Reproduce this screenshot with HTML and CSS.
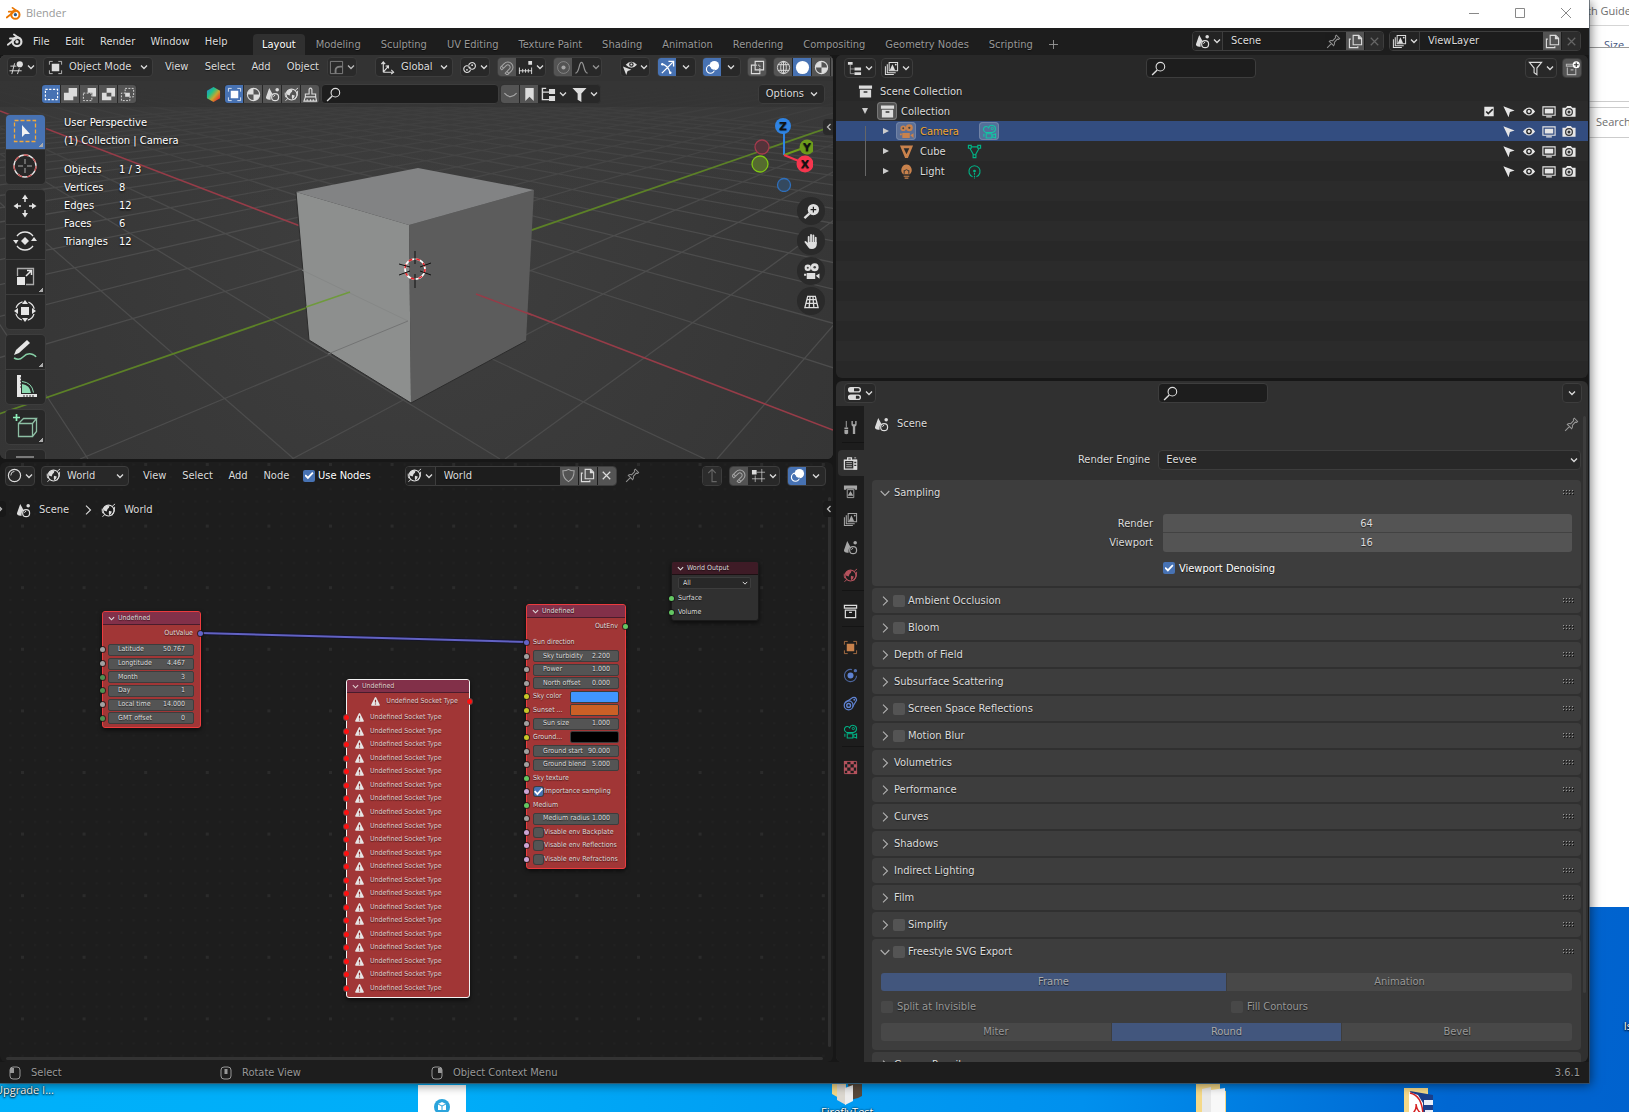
FILE: index.html
```html
<!DOCTYPE html>
<html lang="en">
<head>
<meta charset="utf-8">
<title>Blender</title>
<link rel="stylesheet" href="styles.css">
</head>
<body>
<svg class="sprite" aria-hidden="true">
<defs>
<linearGradient id="rainbow" x1="0" y1="0" x2="1" y2="1"><stop offset="0" stop-color="#2a7de0"/><stop offset=".35" stop-color="#1fc38a"/><stop offset=".6" stop-color="#c9a52e"/><stop offset=".85" stop-color="#e8382c"/></linearGradient>
<symbol id="chev" viewBox="0 0 8 8"><path d="M1 2.500 4 5.500l3-3" fill="none" stroke="currentColor" stroke-width="1.300"/></symbol>
<symbol id="thin" viewBox="0 0 10 10"><path d="M.7 3 5 7.500 9.300 3" fill="none" stroke="currentColor" stroke-width="1.100"/></symbol>
<symbol id="logo" viewBox="0 0 16 14"><circle cx="10" cy="8.2" r="4.4" fill="none" stroke="currentColor" stroke-width="2.2"/><circle cx="10" cy="8.2" r="1.7" fill="var(--dot, currentColor)"/><path d="M.8 11.2 7.5 6M3 5h6.5M7 1l5.500 4" fill="none" stroke="currentColor" stroke-width="1.900" stroke-linecap="round"/></symbol>
<symbol id="ed3d" viewBox="0 0 16 16"><g fill="none" stroke="currentColor" stroke-width="1"><path d="M1.500 6.500H8M.5 11.500h13M6 3.500 3 15M11 9 9 15"/></g><circle cx="11.500" cy="4.500" r="3.300" fill="currentColor"/></symbol>
<symbol id="obj" viewBox="0 0 16 16"><path d="M4 4h8v8H4z" fill="currentColor"/><path d="M1.500 5V1.500H5M11 1.500h3.500V5M14.500 11v3.500H11M5 14.500H1.500V11" fill="none" stroke="currentColor" opacity=".8"/></symbol>
<symbol id="falloff" viewBox="0 0 16 16"><path d="M1.500 1.500h13v13h-13z" fill="none" stroke="currentColor"/><path d="M7 14V11q0-4 5-4h2" fill="none" stroke="currentColor" stroke-width="2"/></symbol>
<symbol id="orient" viewBox="0 0 16 16"><path d="M3.500 13V3M3.500 13H13M3.500 13l5-6M1.500 4.500 3.500 2l2 2.500M12 10.500l2.500 2.500-2.500 2M6 6.500l3-.3V9" fill="none" stroke="currentColor" stroke-width="1.200"/></symbol>
<symbol id="pivot" viewBox="0 0 16 16"><g fill="none" stroke="currentColor" stroke-width="1.200"><path d="M7.500 6.700A3.600 3.600 0 1 0 9 10.500M8.300 9A3.600 3.600 0 1 0 7.200 5.500"/></g><circle cx="8" cy="8" r="1.200" fill="currentColor"/><circle cx="5.300" cy="10.500" r="1" fill="currentColor"/><circle cx="10.800" cy="5.500" r="1" fill="currentColor"/></symbol>
<symbol id="magnet" viewBox="0 0 16 16"><g transform="rotate(45 8 8)"><path d="M2.500 14V7.500a5.500 5.500 0 0 1 11 0V14h-3V7.500a2.500 2.500 0 0 0-5 0V14zM2.500 11.500h3M10.500 11.500h3" fill="none" stroke="currentColor" stroke-width="1.100"/></g></symbol>
<symbol id="incr" viewBox="0 0 16 16"><path d="M11 1h4v4h-4z" fill="currentColor"/><path d="M1.500 8v7M14.500 8v7M1 11.500h14M5 9.500v4M8 9.500v4M11 9.500v4" stroke="currentColor" fill="none"/></symbol>
<symbol id="prop" viewBox="0 0 16 16"><circle cx="8" cy="8" r="6.300" fill="none" stroke="currentColor" opacity=".6"/><circle cx="8" cy="8" r="2.200" fill="currentColor"/></symbol>
<symbol id="bell" viewBox="0 0 16 16"><path d="M1.500 14C6 14 5 2.500 8 2.500S10 14 14.500 14" fill="none" stroke="currentColor" stroke-width="1.300"/></symbol>
<symbol id="eye" viewBox="0 0 16 16"><path d="M1.500 8q6.500-8.500 13 0-6.500 8.500-13 0z" fill="currentColor"/><circle cx="8" cy="8" r="3" fill="#292929"/><circle cx="8" cy="8" r="1.500" fill="currentColor"/></symbol>
<symbol id="eyecur" viewBox="0 0 16 16"><path d="M4 5q6-6.500 12 0-6 6.500-12 0z" fill="currentColor"/><circle cx="10" cy="4.800" r="2.400" fill="#282828"/><circle cx="10" cy="4.800" r="1.100" fill="currentColor"/><path d="m1 7 9 3.500-4 1.200L4.500 16z" fill="currentColor"/></symbol>
<symbol id="gizmo" viewBox="0 0 16 16"><path d="M1.500 4.500q7 .5 9.500 10M2 14 13.500 2.500M9 1.500h5.500V7" fill="none" stroke="currentColor" stroke-width="1.400"/><circle cx="2.500" cy="4.500" r="1.300" fill="currentColor"/><circle cx="11" cy="13.500" r="1.300" fill="currentColor"/></symbol>
<symbol id="over" viewBox="0 0 16 16"><circle cx="10" cy="6" r="5" fill="currentColor"/><circle cx="5.800" cy="9.800" r="4.300" fill="none" stroke="currentColor" stroke-width="1.200"/><path d="M5.200 7.500a4.500 4.500 0 0 0 5.300 3.300" fill="none" stroke="#4772b3" stroke-width="1.300"/></symbol>
<symbol id="xray" viewBox="0 0 16 16"><path d="M5.500 1.500h9v9h-9zM5 5.500H1.500v9h9V11" fill="none" stroke="currentColor" stroke-width="1.200"/><path d="M6 5.500h4.500V10" fill="none" stroke="currentColor" stroke-dasharray="1.500 1"/></symbol>
<symbol id="wire" viewBox="0 0 16 16"><g fill="none" stroke="currentColor"><circle cx="8" cy="8" r="6.500"/><ellipse cx="8" cy="8" rx="3" ry="6.500"/><path d="M8 1.500v13M2 5h12M2 11h12"/></g></symbol>
<symbol id="solid" viewBox="0 0 16 16"><circle cx="8" cy="8" r="7" fill="currentColor"/></symbol>
<symbol id="mat" viewBox="0 0 16 16"><circle cx="8" cy="8" r="6.500" fill="none" stroke="currentColor" stroke-width="1.200"/><path d="M8 8V1.500A6.500 6.500 0 0 0 1.500 8zM8 8v6.500A6.500 6.500 0 0 0 14.500 8z" fill="currentColor"/></symbol>
<symbol id="selset" viewBox="0 0 16 16"><path d="M1.500 2.500h13v11h-13z" fill="none" stroke="currentColor" stroke-width="1.200" stroke-dasharray="2.400 1.600"/></symbol>
<symbol id="selext" viewBox="0 0 16 16"><path d="M6 1h9v9h-4v4H1V6h5z" fill="currentColor"/></symbol>
<symbol id="selsub" viewBox="0 0 16 16"><path d="M6 1h9v9h-4V6H6z" fill="currentColor"/><path d="M1.500 6.500h9v8h-9z" fill="none" stroke="currentColor" stroke-dasharray="2 1.500"/></symbol>
<symbol id="selinv" viewBox="0 0 16 16"><path fill-rule="evenodd" d="M6 1h9v9h-4v4H1V6h5zM6 6v4h5V6z" fill="currentColor"/></symbol>
<symbol id="selint" viewBox="0 0 16 16"><path d="M5.500 6h5v4.500h-5z" fill="currentColor"/><path d="M5.500 1.500h9v9h-4v4h-9v-8h4z" fill="none" stroke="currentColor" stroke-dasharray="2 1.500"/></symbol>
<symbol id="hex" viewBox="0 0 16 16"><path d="m8 0 7 4v8l-7 4-7-4V4z" fill="url(#rainbow)"/></symbol>
<symbol id="scene" viewBox="0 0 16 16"><path d="M4.500 1 8 7.500Q5.500 9 6 13.500 1 14 1 11z" fill="currentColor"/><circle cx="13" cy="3" r="1.900" fill="currentColor"/><circle cx="10.800" cy="10.800" r="3.700" fill="none" stroke="currentColor" stroke-width="1.300"/><path d="M9 10.500q.3-1.500 1.800-1.700" fill="none" stroke="currentColor"/></symbol>
<symbol id="world" viewBox="0 0 16 16"><circle cx="8" cy="8" r="5.800" fill="none" stroke="currentColor" stroke-width="1.200"/><path d="M3 4.500 6 2.300l3 .7-.5 2L7 6.500 6 9 3 8zM8.500 8.300l3 .7-.6 2L9 13.300l-.7-2.500z" fill="currentColor"/><path d="M12 3.500 15 1M1.500 14.500l2.500-2M14.500 4q1 5-3 9.500M1.300 6Q1 9 2 11" fill="none" stroke="currentColor"/></symbol>
<symbol id="brush" viewBox="0 0 16 16"><path d="M6.500 7.500v-5q1.500-2.500 3 0v5h4v3h-11v-3zM2.500 10.500 1 15h13.500l-1-4.500M4.500 15v-2M8 15v-2M11 15v-2" fill="none" stroke="currentColor" stroke-width="1.200"/></symbol>
<symbol id="find" viewBox="0 0 16 16"><circle cx="10" cy="6" r="4.600" fill="none" stroke="currentColor" stroke-width="1.200"/><path d="M6.600 9.500 1.200 15" stroke="currentColor" stroke-width="1.500"/></symbol>
<symbol id="lid" viewBox="0 0 16 16"><path d="M1.500 6.500q6.500 7.500 13 0" fill="none" stroke="currentColor" stroke-width="1.200"/></symbol>
<symbol id="mark" viewBox="0 0 16 16"><path d="M3.500 1h9v14L8 10.500 3.500 15z" fill="currentColor"/></symbol>
<symbol id="tree" viewBox="0 0 16 16"><path d="M5.500 1.500h-4v12H9M1.500 5.500H9" fill="none" stroke="currentColor" stroke-width="1.500"/><path d="M8.500 2H15v5.500H8.500zM8.500 9.500H15V15H8.500z" fill="currentColor"/></symbol>
<symbol id="outl" viewBox="0 0 16 16"><path d="M1 1h5v3H1zM8 7h7v3H8zM8 12h7v3H8z" fill="currentColor"/><path d="M3.500 4v9.500H8M3.500 8.500H8" fill="none" stroke="currentColor" opacity=".6"/></symbol>
<symbol id="fun" viewBox="0 0 16 16"><path d="M.5 1h15l-5.500 6v9l-4-2.500V7z" fill="currentColor"/></symbol>
<symbol id="funo" viewBox="0 0 16 16"><path d="M1.500 1.500h13L9.500 7.500v7l-3-2v-5z" fill="none" stroke="currentColor" stroke-width="1.200"/></symbol>
<symbol id="view" viewBox="0 0 16 16"><path d="M5.500 1.500h9v9h-9zM3.500 3.500v9h9M1.500 5.500v9h9" fill="none" stroke="currentColor" stroke-width="1.100"/><path d="m6 10 3-6.500 3 6.500z" fill="currentColor"/><circle cx="12.500" cy="3.800" r="1" fill="currentColor"/></symbol>
<symbol id="box" viewBox="0 0 16 16"><path d="M1 1.500h14V5H1zM2 6h12v8.500H2z" fill="currentColor"/><path d="M6 8.500h4" stroke="#333" stroke-width="1.500"/></symbol>
<symbol id="boxo" viewBox="0 0 16 16"><path d="M1.500 1.500h13v3h-13zM2.500 6.500h11v8h-11zM6.500 9h3" fill="none" stroke="currentColor" stroke-width="1.300"/></symbol>
<symbol id="boxadd" viewBox="0 0 16 16"><path d="M9 3.500H1.500v2H9M2.500 7v7.500h9V8M6 9.500h3" fill="none" stroke="currentColor" stroke-width="1.200" opacity=".7"/><circle cx="12" cy="4" r="3.800" fill="#fff"/><path d="M9.500 4h5M12 1.500v5" stroke="#333" stroke-width="1.200"/></symbol>
<symbol id="cam" viewBox="0 0 16 16"><circle cx="4.500" cy="4.500" r="3" fill="currentColor"/><circle cx="11" cy="4" r="3.700" fill="currentColor"/><path d="M3.500 9.500h8v5.500h-8zM12 12l3.500-2.200v5zM1 10h2v2H1z" fill="currentColor"/><circle cx="4.500" cy="4.500" r="1" fill="#444"/><circle cx="11" cy="4" r="1.200" fill="#444"/></symbol>
<symbol id="camo" viewBox="0 0 16 16"><path d="M3.500 8.500a3 3 0 1 1 3.500-4.500 3.800 3.800 0 1 1 4 5H3.500M4.500 10.500h6V15h-6zM11 12l3.500-1.500V15L11 13.500M2 10.500v3" fill="none" stroke="currentColor" stroke-width="1.100"/><circle cx="11" cy="4.800" r="1.200" fill="none" stroke="currentColor"/></symbol>
<symbol id="mesh" viewBox="0 0 16 16"><path fill-rule="evenodd" d="M1 1.500h14L9.500 15h-3zM5 4.500 8 11l3-6.500z" fill="currentColor"/></symbol>
<symbol id="mesho" viewBox="0 0 16 16"><path d="M1.500 1.500h3v3h-3zM11.500 1.500h3v3h-3zM6.500 11.500h3v3h-3zM4.500 3h7M3 4.500l4 7M13 4.500l-4 7" fill="none" stroke="currentColor" stroke-width="1.200"/></symbol>
<symbol id="lamp" viewBox="0 0 16 16"><path d="M8 .5a6 6 0 0 1 3.500 10.500h-7A6 6 0 0 1 8 .5z" fill="currentColor"/><path d="M5.500 6.500v4M10.500 6.500v4M5.500 7.500 8 6l2.500 1.500" stroke="#333" fill="none"/><path d="M5 13h6M6 15h4" stroke="currentColor" stroke-width="1.200"/></symbol>
<symbol id="lampo" viewBox="0 0 16 16"><path d="M6 13.500a6 6 0 1 1 4 0" fill="none" stroke="currentColor" stroke-width="1.200"/><circle cx="8" cy="7.500" r="1.500" fill="currentColor"/><path d="M8 9.500V16" stroke="currentColor" stroke-width="1.200" stroke-dasharray="2 1"/></symbol>
<symbol id="cur" viewBox="0 0 16 16"><path d="m2 2.500 12 4.500-5 1.500L7.500 14z" fill="currentColor"/></symbol>
<symbol id="mon" viewBox="0 0 16 16"><path d="M1.500 3h13v9h-13z" fill="none" stroke="currentColor" stroke-width="1.200"/><path d="M3.500 5h9v5h-9zM5 13h6v1.500H5z" fill="currentColor"/></symbol>
<symbol id="shot" viewBox="0 0 16 16"><path d="M1 4h3.500L6 2h4l1.500 2H15v9.500H1z" fill="currentColor"/><circle cx="8" cy="8.500" r="3.600" fill="none" stroke="#333" stroke-width="1.300"/><circle cx="8" cy="8.500" r="1.600" fill="#333"/></symbol>
<symbol id="tick" viewBox="0 0 16 16"><path d="M3 3h10v10H3z" fill="currentColor"/><path d="m5 8 2.200 2.200L12 5.500" fill="none" stroke="#282828" stroke-width="1.800"/></symbol>
<symbol id="pin" viewBox="0 0 16 16"><path d="m1.200 14.800 4.500-4.500M3.500 7.800l4.700 4.700q1.500-1.500.7-3.500L12 5.500l1.500.2 1-1L11 1.200l-1 1 .3 1.600L7 7.300Q5 6.500 3.500 7.800z" fill="none" stroke="currentColor" stroke-width="1.100"/></symbol>
<symbol id="copy" viewBox="0 0 16 16"><path d="M5.500 1.500h6l3 3v7h-9zM3 5.500H1.500v9h9V13" fill="none" stroke="currentColor" stroke-width="1.200"/><path d="M10.500 1v4.500H15z" fill="currentColor"/></symbol>
<symbol id="x" viewBox="0 0 16 16"><path d="m4 4 8 8M12 4l-8 8" fill="none" stroke="currentColor" stroke-width="1.300"/></symbol>
<symbol id="shield" viewBox="0 0 16 16"><path d="M8 1.500q3 1.800 6 1.500 0 8.500-6 11.500-6-3-6-11.500 3 .3 6-1.500z" fill="none" stroke="currentColor" stroke-width="1.100"/></symbol>
<symbol id="up" viewBox="0 0 16 16"><path d="M12.500 14.500H7.500v-13M3.500 5.500l4-4 4 4" fill="none" stroke="currentColor" stroke-width="1.200"/></symbol>
<symbol id="sgrid" viewBox="0 0 16 16"><path d="M1 2h5v5H1z" fill="currentColor"/><path d="M1 11.500h14M6 4.500h9M4.500 8v7M11.500 1v14" stroke="currentColor" fill="none" opacity=".7"/></symbol>
<symbol id="ball" viewBox="0 0 16 16"><circle cx="8" cy="8" r="6.500" fill="none" stroke="currentColor" stroke-width="1.300"/><path d="M4 8q0-4 4-4.500" fill="none" stroke="currentColor"/></symbol>
<symbol id="props" viewBox="0 0 16 16"><path d="M4 1h8q3 0 3 3t-3 3H4Q1 7 1 4t3-3zM4 9h8q3 0 3 3t-3 3H4q-3 0-3-3t3-3z" fill="currentColor"/><path d="M7.500 2.300H12q1.500 0 1.500 1.700T12 5.700H7.500zM9.500 10.300H12q1.500 0 1.500 1.700t-1.500 1.700H9.500z" fill="#282828"/></symbol>
<symbol id="tool" viewBox="0 0 16 16"><path d="M3.500 1v7" stroke="currentColor"/><path d="M1.500 8h4v1.500h-4zM1.500 10.500h4v4q-2 1.500-4 0zM9 1v3.500q0 2 1.500 2.500v8h2.500V7q1.500-.5 1.500-2.500V1H13v3.500h-2.500V1z" fill="currentColor"/></symbol>
<symbol id="rend" viewBox="0 0 16 16"><path d="M1.500 4.500h13V14h-13zM5 4V2h4v2" fill="none" stroke="currentColor" stroke-width="1.400"/><path d="M3.500 7h6M3.500 9.200h6M3.500 11.400h6" stroke="currentColor" opacity=".7"/><path d="M11 4h4v10.500h-4zM12 1.500h2v1h-2z" fill="currentColor"/><path d="M12 7h2.200M12 10h2.200" stroke="#303030" stroke-width="1.500"/></symbol>
<symbol id="out" viewBox="0 0 16 16"><path d="M1 1.500h14V6h-2.500V5h-9v1H1z" fill="currentColor"/><path d="M4.500 6v8.500h7V6z" fill="none" stroke="currentColor"/><path d="m5 12.500 3-5 3 5z" fill="currentColor"/></symbol>
<symbol id="phys" viewBox="0 0 16 16"><circle cx="8" cy="8" r="3.200" fill="currentColor"/><circle cx="13.200" cy="2.800" r="1.800" fill="currentColor" opacity=".8"/><path d="M9.500 1.700a6.500 6.500 0 1 0 5 6.500" fill="none" stroke="currentColor" opacity=".7" stroke-width="1.200"/></symbol>
<symbol id="cons" viewBox="0 0 16 16"><circle cx="6" cy="10" r="4.700" fill="none" stroke="currentColor" stroke-width="1.300"/><circle cx="6" cy="10" r="2" fill="none" stroke="currentColor" stroke-width="1.500"/><path d="M2.500 7 10 1.800q4-1.500 4.500 2.700L10.300 11.500" fill="none" stroke="currentColor" stroke-width="1.300"/><circle cx="12" cy="4" r="1" fill="currentColor"/></symbol>
<symbol id="tex" viewBox="0 0 16 16"><path d="M1.500 1.500h13v13h-13z" fill="none" stroke="currentColor"/><path d="M1 1h3.500v3.500H1zM8 1h3.500v3.500H8zM4.500 4.500H8V8H4.500zM11.500 4.500H15V8h-3.500zM1 8h3.500v3.500H1zM8 8h3.500v3.500H8zM4.500 11.500H8V15H4.500zM11.500 11.500H15V15h-3.500z" fill="currentColor"/></symbol>
<symbol id="warn" viewBox="0 0 10 10"><path d="M5 0q.6 0 .8.500l4 8q.2 1-.8 1.200H1q-1-.2-.8-1.200l4-8Q4.400 0 5 0z" fill="#e6e6e6"/><path d="M5 3v3M5 7.200v1.200" stroke="#8a2c2c" stroke-width="1.300"/></symbol>
<symbol id="grip" viewBox="0 0 12 6"><path d="M0 .5h1M3 .5h1M6 .5h1M9 .5h1M0 3.500h1M3 3.500h1M6 3.500h1M9 3.500h1" stroke="#999"/><path d="M1 1.500h1M4 1.500h1M7 1.500h1M10 1.500h1M1 4.500h1M4 4.500h1M7 4.500h1M10 4.500h1" stroke="#111"/></symbol>
<symbol id="folder" viewBox="0 0 30 30"><path d="M0 0h24v5l6 2v23H0z" fill="#f5d988"/><path d="m6 5 9-2 1 27H6z" fill="#e9e9e9"/><path d="m15 6 14-2v26H15z" fill="#f8f8f8"/></symbol>
</defs>
</svg>

<div class="back-window">
  <div class="bw-title">th Guide</div>
  <div class="bw-cols"><span>Size</span></div>
  <div class="bw-front">
    <div class="bw-bar"></div>
    <div class="bw-search">Search</div>
  </div>
</div>

<div class="desk d-upgrade">Upgrade I...</div>
<div class="desk d-file"><svg viewBox="0 0 48 28"><path d="M0 1h48v27H0z" fill="#fff"/><circle cx="24" cy="23" r="8" fill="#2aa4dc"/><path d="m24 18 4 2v6h-8v-6z" fill="#fff"/><path d="m20 20 4 2 4-2M24 22v6" stroke="#2aa4dc" fill="none"/></svg></div>
<div class="desk d-firefly"><svg viewBox="0 0 30 22"><path d="M0 0h14v18L0 10z" fill="#f5d988"/><path d="m5 0 9 1v20l-9-5z" fill="#dcd8d0"/><path d="M16 0h14v12l-4 2-8 2z" fill="#57493c"/><path d="m13 4 8-3v16l-8 4z" fill="#eee"/></svg><span>FireflyTest</span></div>
<div class="desk d-folder"><svg viewBox="0 0 30 30"><use href="#folder"/></svg></div>
<div class="desk d-pdf"><svg viewBox="0 0 30 30"><path d="M0 0h24v30H0z" fill="#f5d988"/><path d="m6 3 23 4v23H14z" fill="#1c3f8a"/><path d="M20 12h9v5h-9zM21 22h8v6h-8z" fill="#e8eef8"/><path d="m5 4 9 3 5 8v15H5z" fill="#fff"/><path d="M6 5q13 3 13 24M8 26q5-4 4-10 1 7 5 9-5-1-9 1" fill="none" stroke="#d62222" stroke-width="1.500"/></svg></div>
<div class="desk d-is">Is</div>

<div class="app">
  <header class="titlebar">
    <svg class="ic t-logo"><use href="#logo"/></svg><span class="t-name">Blender</span>
    <button aria-label="Minimize"><svg viewBox="0 0 10 10"><path d="M0 5.500h10"/></svg></button>
    <button aria-label="Maximize"><svg viewBox="0 0 10 10"><path d="M.5.5h9v9h-9z"/></svg></button>
    <button aria-label="Close"><svg viewBox="0 0 10 10"><path d="m0 0 10 10M10 0 0 10"/></svg></button>
  </header>

  <nav class="topbar">
    <svg class="ic b-logo"><use href="#logo"/></svg>
    <div class="menus m-top"><button>File</button><button>Edit</button><button>Render</button><button>Window</button><button>Help</button></div>
    <div class="tabs" role="tablist"><button class="on" role="tab">Layout</button><button role="tab">Modeling</button><button role="tab">Sculpting</button><button role="tab">UV Editing</button><button role="tab">Texture Paint</button><button role="tab">Shading</button><button role="tab">Animation</button><button role="tab">Rendering</button><button role="tab">Compositing</button><button role="tab">Geometry Nodes</button><button role="tab">Scripting</button><button class="plus" aria-label="Add workspace"><svg viewBox="0 0 10 10"><path d="M0 5h10M5 0v10"/></svg></button></div>
    <div class="grp block"><button class="dd"><svg class="ic"><use href="#scene"/></svg><svg class="cv"><use href="#chev"/></svg></button><input aria-label="Scene" value="Scene"><svg class="ic dim fieldpin"><use href="#pin"/></svg><button class="sq grey"><svg class="ic"><use href="#copy"/></svg></button><button class="sq off"><svg class="ic"><use href="#x"/></svg></button></div>
    <div class="grp block"><button class="dd"><svg class="ic"><use href="#view"/></svg><svg class="cv"><use href="#chev"/></svg></button><input aria-label="View layer" value="ViewLayer"><button class="sq grey"><svg class="ic"><use href="#copy"/></svg></button><button class="sq off"><svg class="ic"><use href="#x"/></svg></button></div>
  </nav>

  <main class="areas">
    <div class="col">
      <section class="area viewport">
        <svg class="scene3d" viewBox="0 55 833 404" preserveAspectRatio="xMidYMid slice">
          <defs>
            <radialGradient id="vbg" gradientUnits="userSpaceOnUse" cx="416" cy="240" r="520"><stop offset="0" stop-color="#3f3f3f"/><stop offset="1" stop-color="#343434"/></radialGradient>
            <linearGradient id="fade" x1="0" y1="0" x2="0" y2="1"><stop offset="0" stop-color="#3a3a3a"/><stop offset=".15" stop-color="#3a3a3a"/><stop offset="1" stop-color="#3a3a3a" stop-opacity="0"/></linearGradient>
          </defs>
          <path d="M0 55h833v404H0z" fill="url(#vbg)"/>
          <path fill="none" stroke="#4c4c4c" stroke-width="1.300" d="M1082 40L80 459M1082 40L292 459M1082 40L505 459M1082 40L717 459M1082 40L-346 459M1082 40L-558 459M1082 40L-771 459M1082 40L-983 459M1082 40L-1196 459M1082 40L-1409 459M1082 40L-1621 459M1082 40L-1834 459M1082 40L-2046 459M1082 40L-2259 459M1082 40L-2472 459M1082 40L-2684 459M1082 40L-2897 459M1082 40L-3109 459M1082 40L-3322 459M1082 40L-3535 459M1082 40L-3747 459M1082 40L-3960 459M1082 40L-4172 459M-187 40L705 459M-187 40L500 459M-187 40L294 459M-187 40L88 459M-187 40L1117 459M-187 40L1322 459M-187 40L1528 459M-187 40L1734 459M-187 40L1940 459M-187 40L2145 459M-187 40L2351 459M-187 40L2557 459M-187 40L2762 459M-187 40L2968 459M-187 40L3174 459M-187 40L3379 459M-187 40L3585 459M-187 40L3791 459M-187 40L3997 459M-187 40L4202 459M-187 40L4408 459M-187 40L4614 459"/>
          <path d="M0 55h833v165H0z" fill="url(#fade)"/>
          <path d="M0 111 833 430" stroke="#963c48" stroke-width="1.600"/>
          <path d="M-1 414 833 126" stroke="#5c8127" stroke-width="1.700"/>
          <path d="m296 192 113 33 2 178-102-63z" fill="#8d8f8e"/>
          <path d="m409 225 125-35-8 151-115 62z" fill="#5c5c5c"/>
          <path d="m418 168 116 22-125 35-113-33z" fill="#828384"/>
          <path d="m296 192 13 148 102 63 115-62" fill="none" stroke="#2c2c2c" stroke-width="1"/>
          <path d="m302 270 106 51" fill="none" stroke="#868887"/><path d="m408 321-80 33" fill="none" stroke="#737474"/>
          <path d="m306 307 44-15" stroke="#6f9a3c" stroke-width="1.500"/>
          <path d="m476 294 56 21" stroke="#963c48" stroke-width="1.500"/>
          <g fill="none"><circle cx="415" cy="269" r="10" stroke="#fff" stroke-width="1.600"/><circle cx="415" cy="269" r="10" stroke="#e8242a" stroke-width="1.600" stroke-dasharray="4 4"/><path d="M415 251v13M415 274v14M399 264l11 3M420 271l11 4M399 275l11-4M420 267l11-4" stroke="#111"/></g>
        </svg>
        <div class="hdr vh">
          <div class="grp"><button class="dd w30"><svg class="ic"><use href="#ed3d"/></svg><svg class="cv"><use href="#chev"/></svg></button></div>
          <div class="sel w-mode"><svg class="ic"><use href="#obj"/></svg><select aria-label="Mode"><option>Object Mode</option></select><svg class="cv"><use href="#chev"/></svg></div>
          <div class="menus m-view"><button>View</button><button>Select</button><button>Add</button><button>Object</button></div>
          <div class="grp faded"><button class="dd w30"><svg class="ic dim"><use href="#falloff"/></svg><svg class="cv"><use href="#chev"/></svg></button></div>
          <div class="sel w-global sp18"><svg class="ic"><use href="#orient"/></svg><select aria-label="Orientation"><option>Global</option></select><svg class="cv"><use href="#chev"/></svg></div>
          <div class="grp sp7"><button class="dd w30"><svg class="ic"><use href="#pivot"/></svg><svg class="cv"><use href="#chev"/></svg></button></div>
          <div class="grp sp7"><button class="sq grey"><svg class="ic dim"><use href="#magnet"/></svg></button><button class="dd w30"><svg class="ic"><use href="#incr"/></svg><svg class="cv"><use href="#chev"/></svg></button></div>
          <div class="grp sp7"><button class="sq grey"><svg class="ic dim"><use href="#prop"/></svg></button><button class="dd w30 dim"><svg class="ic"><use href="#bell"/></svg><svg class="cv"><use href="#chev"/></svg></button></div>
          <div class="grp sp18"><button class="dd w30"><svg class="ic"><use href="#eyecur"/></svg><svg class="cv"><use href="#chev"/></svg></button></div>
          <div class="grp sp7"><button class="sq blue"><svg class="ic"><use href="#gizmo"/></svg></button><button class="sq"><svg class="cv"><use href="#chev"/></svg></button></div>
          <div class="grp sp6"><button class="sq blue"><svg class="ic"><use href="#over"/></svg></button><button class="sq"><svg class="cv"><use href="#chev"/></svg></button></div>
          <div class="grp sp6"><button class="sq grey"><svg class="ic"><use href="#xray"/></svg></button></div>
          <div class="grp sp6"><button class="sq grey"><svg class="ic"><use href="#wire"/></svg></button><button class="sq blue"><svg class="ic"><use href="#solid"/></svg></button><button class="sq grey"><svg class="ic"><use href="#mat"/></svg></button><button class="sq grey"><svg class="ic"><use href="#ball"/></svg></button></div>
        </div>
        <div class="hdr vh2">
          <div class="grp soft"><button class="sq blue"><svg class="ic"><use href="#selset"/></svg></button><button class="sq grey"><svg class="ic"><use href="#selext"/></svg></button><button class="sq grey"><svg class="ic"><use href="#selsub"/></svg></button><button class="sq grey"><svg class="ic"><use href="#selinv"/></svg></button><button class="sq grey"><svg class="ic"><use href="#selint"/></svg></button></div>
          <svg class="ic hexi"><use href="#hex"/></svg>
          <div class="grp soft"><button class="sq blue"><svg class="ic"><use href="#obj"/></svg></button><button class="sq grey"><svg class="ic"><use href="#mat"/></svg></button><button class="sq grey"><svg class="ic"><use href="#scene"/></svg></button><button class="sq grey"><svg class="ic"><use href="#world"/></svg></button><button class="sq grey"><svg class="ic"><use href="#brush"/></svg></button></div>
          <label class="search s-view"><svg class="ic"><use href="#find"/></svg><input aria-label="Search"></label>
          <div class="grp soft"><button class="sq grey"><svg class="ic dim"><use href="#lid"/></svg></button><button class="sq grey"><svg class="ic"><use href="#mark"/></svg></button><button class="dd w32"><svg class="ic"><use href="#tree"/></svg><svg class="cv"><use href="#chev"/></svg></button><button class="dd w32"><svg class="ic"><use href="#fun"/></svg><svg class="cv"><use href="#chev"/></svg></button></div>
          <div class="grp push"><button class="dd opt">Options <svg class="cv"><use href="#chev"/></svg></button></div>
        </div>
        <div class="tools">
          <div class="tg"><button class="on more" aria-label="Select Box"><svg viewBox="0 0 26 26"><path d="M2.500 2.500h21v21h-21z" fill="none" stroke="#f2a93b" stroke-width="1.300" stroke-dasharray="4 2"/><path d="M10 7v12l3-3h5z" fill="#f2f2f2"/></svg></button><button aria-label="Cursor"><svg viewBox="0 0 26 26"><g fill="none"><circle cx="13" cy="13" r="11" stroke="#e6e6e6" stroke-width="1.300"/><circle cx="13" cy="13" r="11" stroke="#c25050" stroke-width="1.300" stroke-dasharray="5 5"/><path d="M13 6v5M13 15v5M6 13h5M15 13h5" stroke="#aaa"/></g></svg></button></div>
          <div class="tg"><button aria-label="Move"><svg viewBox="0 0 26 26"><path d="M13 1.500 10 6h6zM13 24.500 10 20h6zM1.500 13 6 10v6zM24.500 13 20 10v6z" fill="#e6e6e6"/><path d="M13 6v3M13 17v3M6 13h3M17 13h3" stroke="#e6e6e6" stroke-width="1.500"/></svg></button><button aria-label="Rotate"><svg viewBox="0 0 26 26"><path d="M5 8a10 10 0 0 1 16 0M5 18a10 10 0 0 0 16 0" fill="none" stroke="#e6e6e6" stroke-width="1.300"/><path d="m13 9 4 4-4 4-4-4zM1 12h5.500L4 16zM19 13l3-4 3 4z" fill="#e6e6e6"/></svg></button><button class="more" aria-label="Scale"><svg viewBox="0 0 26 26"><path d="M5.500 13V5.500h16v16H14" fill="none" stroke="#aaa" stroke-width="1.300"/><path d="M5 14h8v8H5z" fill="#e6e6e6"/><path d="m14 13 5-5M15 7.500h4.500V12" fill="none" stroke="#e6e6e6" stroke-width="1.500"/></svg></button><button aria-label="Transform"><svg viewBox="0 0 26 26"><circle cx="13" cy="13" r="9.500" fill="none" stroke="#e6e6e6" stroke-width="1.200" stroke-dasharray="9 6" stroke-dashoffset="-3"/><path d="M9 9h8v8H9zM13 2l-3 4h6zM13 24l-3-4h6zM2 13l4-3v6zM24 13l-4-3v6z" fill="#e6e6e6"/></svg></button></div>
          <div class="tg"><button class="more" aria-label="Annotate"><svg viewBox="0 0 26 26"><path d="m2 17 2-5L15 2l3 3L7 15z" fill="#e6e6e6"/><path d="M2 20q5 3 9-1t8-3 5 3" fill="none" stroke="#86cfa6" stroke-width="1.500"/></svg></button><button aria-label="Measure"><svg viewBox="0 0 26 26"><path d="M5 2h4v19h16v3H5z" fill="#e6e6e6"/><path d="M10 20V11q8 1 9 9z" fill="#8ddab2"/><path d="M10 8.500q10 1 11.500 11" fill="none" stroke="#8ddab2"/><path d="M8 5h2M8 8h2M8 11h2M8 14h2M12 22v2M15 22v2M18 22v2M21 22v2" stroke="#333"/></svg></button></div>
          <div class="tg"><button class="more" aria-label="Add Cube"><svg viewBox="0 0 26 26"><path d="M6.500 10.500h14v13h-14zM6.500 10.500l5-5h13l-4 5M24.500 5.500v13l-4 5" fill="none" stroke="#8dbfa4" stroke-width="1.300"/><path d="M4.500 1v7M1 4.500h7" stroke="#8ff0bb" stroke-width="1.700"/></svg></button></div>
          <div class="tg"><button aria-label="Extrude"><svg viewBox="0 0 26 26"><path d="M4 4h18" stroke="#ccc"/></svg></button></div>
        </div>
        <div class="stats"><p>User Perspective</p><p>(1) Collection | Camera</p><dl><dt>Objects</dt><dd>1 / 3</dd><dt>Vertices</dt><dd>8</dd><dt>Edges</dt><dd>12</dd><dt>Faces</dt><dd>6</dd><dt>Triangles</dt><dd>12</dd></dl></div>
        <div class="navi">
          <svg class="axes" viewBox="0 0 70 84"><path d="M41 47V17" stroke="#2f83e3" stroke-width="2"/><path d="m41 47 22-8" stroke="#6d9c1b" stroke-width="2"/><path d="m41 47 22 9" stroke="#f6364e" stroke-width="2"/><circle cx="19" cy="39" r="7" fill="#55333a" stroke="#a33a4c" stroke-width="1.300"/><circle cx="17" cy="56" r="8" fill="#556b2f" stroke="#80c815" stroke-width="1.300"/><circle cx="41" cy="77" r="6.500" fill="#34495f" stroke="#2f6fba" stroke-width="1.300"/><circle cx="40" cy="18" r="8" fill="#2f83e3"/><circle cx="64" cy="39" r="7.500" fill="#6d9c1b"/><circle cx="62" cy="56" r="8.500" fill="#f6364e"/><g class="ax"><text x="40" y="22">Z</text><text x="64" y="43">Y</text><text x="62" y="60">X</text></g></svg>
          <button aria-label="Zoom"><svg viewBox="0 0 18 18"><circle cx="11" cy="7" r="6" fill="#dedede"/><path d="m7 11-5.500 5" stroke="#dedede" stroke-width="2.500"/><path d="M11 4v6M8 7h6" stroke="#222" stroke-width="1.300"/></svg></button>
          <button aria-label="Pan"><svg viewBox="0 0 18 18"><path d="M6 11V4M8.500 10V2M11 10V2.500M13.500 11V5" stroke="#dedede" stroke-width="1.900" stroke-linecap="round"/><path d="M5 9.500h9.500V13q-1 4-5 4-3 0-4-2L1.500 9.500q.5-1.500 2-.5L6 11.500z" fill="#dedede"/></svg></button>
          <button aria-label="Camera view"><svg viewBox="0 0 16 16"><use href="#cam"/></svg></button>
          <button aria-label="Perspective"><svg viewBox="0 0 18 18"><path d="M5 3.500h8l3 12H2zM4 7h10M3 11h12M7.500 3.500l-1 12M10.500 3.500l1 12" fill="none" stroke="#dedede" stroke-width="1.400"/></svg></button>
        </div>
        <button class="side side-v" aria-label="Show sidebar"><svg class="cv lt"><use href="#chev"/></svg></button>
      </section>

      <section class="area nodes">
        <svg class="dots"><defs><pattern id="grid" width="61.600" height="61.600" patternUnits="userSpaceOnUse" x="21" y="1"><g fill="#212121"><path id="dr" d="M13 .5h2v2h-2zM25.500.5h2v2h-2zM38 .5h2v2h-2zM50 .5h2v2h-2zM.5.5h2v2h-2z"/><use href="#dr" y="12.300"/><use href="#dr" y="24.600"/><use href="#dr" y="37"/><use href="#dr" y="49.300"/></g><path d="M0 0h3v3H0z" fill="#2b2b2b"/></pattern></defs><rect width="100%" height="100%" fill="url(#grid)"/></svg>
        <div class="hdr nh">
          <div class="grp"><button class="dd w30"><svg class="ic"><use href="#ball"/></svg><svg class="cv"><use href="#chev"/></svg></button></div>
          <div class="sel w-world"><svg class="ic"><use href="#world"/></svg><select aria-label="Shader type"><option>World</option></select><svg class="cv"><use href="#chev"/></svg></div>
          <div class="menus m-node"><button>View</button><button>Select</button><button>Add</button><button>Node</button></div>
          <label class="ck bright usen"><input type="checkbox" checked>Use Nodes</label>
          <div class="grp block datab"><button class="dd"><svg class="ic"><use href="#world"/></svg><svg class="cv"><use href="#chev"/></svg></button><input aria-label="World" value="World"><button class="sq grey"><svg class="ic dim"><use href="#shield"/></svg></button><button class="sq grey"><svg class="ic"><use href="#copy"/></svg></button><button class="sq grey"><svg class="ic"><use href="#x"/></svg></button></div>
          <svg class="ic dim npin"><use href="#pin"/></svg>
          <div class="grp push"><button class="sq off"><svg class="ic"><use href="#up"/></svg></button></div>
          <div class="grp sp7"><button class="sq grey"><svg class="ic dim"><use href="#magnet"/></svg></button><button class="dd w32"><svg class="ic"><use href="#sgrid"/></svg><svg class="cv"><use href="#chev"/></svg></button></div>
          <div class="grp sp7"><button class="sq blue"><svg class="ic"><use href="#over"/></svg></button><button class="sq"><svg class="cv"><use href="#chev"/></svg></button></div>
        </div>
        <div class="crumbs"><svg class="ic"><use href="#scene"/></svg><span>Scene</span><svg class="cv rt big"><use href="#thin"/></svg><svg class="ic"><use href="#world"/></svg><span>World</span></div>
        <button class="side side-l" aria-label="Show toolbar"><svg class="cv rt"><use href="#chev"/></svg></button>
        <svg class="link"><path d="M200 171 527 180" fill="none" stroke="#15152a" stroke-width="4"/><path d="M200 171 527 180" fill="none" stroke="#6262c4" stroke-width="2"/></svg>

        <article class="node n1"><h3><svg class="cv"><use href="#chev"/></svg>Undefined</h3>
          <div class="outr">OutValue<i class="so vec"></i></div>
          <div class="rows">
            <div class="r"><i class="so"></i><label class="f">Latitude<input value="50.767"></label></div>
            <div class="r"><i class="so"></i><label class="f">Longtitude<input value="4.467"></label></div>
            <div class="r"><i class="so int"></i><label class="f">Month<input value="3"></label></div>
            <div class="r"><i class="so int"></i><label class="f">Day<input value="1"></label></div>
            <div class="r"><i class="so"></i><label class="f">Local time<input value="14.000"></label></div>
            <div class="r"><i class="so int"></i><label class="f">GMT offset<input value="0"></label></div>
          </div></article>

        <article class="node n2"><h3><svg class="cv"><use href="#chev"/></svg>Undefined</h3>
          <div class="outr"><svg class="w"><use href="#warn"/></svg>Undefined Socket Type<i class="so bad"></i></div>
          <div class="rows">
            <div class="r"><i class="so bad"></i><svg class="w"><use href="#warn"/></svg>Undefined Socket Type</div>
            <div class="r"><i class="so bad"></i><svg class="w"><use href="#warn"/></svg>Undefined Socket Type</div>
            <div class="r"><i class="so bad"></i><svg class="w"><use href="#warn"/></svg>Undefined Socket Type</div>
            <div class="r"><i class="so bad"></i><svg class="w"><use href="#warn"/></svg>Undefined Socket Type</div>
            <div class="r"><i class="so bad"></i><svg class="w"><use href="#warn"/></svg>Undefined Socket Type</div>
            <div class="r"><i class="so bad"></i><svg class="w"><use href="#warn"/></svg>Undefined Socket Type</div>
            <div class="r"><i class="so bad"></i><svg class="w"><use href="#warn"/></svg>Undefined Socket Type</div>
            <div class="r"><i class="so bad"></i><svg class="w"><use href="#warn"/></svg>Undefined Socket Type</div>
            <div class="r"><i class="so bad"></i><svg class="w"><use href="#warn"/></svg>Undefined Socket Type</div>
            <div class="r"><i class="so bad"></i><svg class="w"><use href="#warn"/></svg>Undefined Socket Type</div>
            <div class="r"><i class="so bad"></i><svg class="w"><use href="#warn"/></svg>Undefined Socket Type</div>
            <div class="r"><i class="so bad"></i><svg class="w"><use href="#warn"/></svg>Undefined Socket Type</div>
            <div class="r"><i class="so bad"></i><svg class="w"><use href="#warn"/></svg>Undefined Socket Type</div>
            <div class="r"><i class="so bad"></i><svg class="w"><use href="#warn"/></svg>Undefined Socket Type</div>
            <div class="r"><i class="so bad"></i><svg class="w"><use href="#warn"/></svg>Undefined Socket Type</div>
            <div class="r"><i class="so bad"></i><svg class="w"><use href="#warn"/></svg>Undefined Socket Type</div>
            <div class="r"><i class="so bad"></i><svg class="w"><use href="#warn"/></svg>Undefined Socket Type</div>
            <div class="r"><i class="so bad"></i><svg class="w"><use href="#warn"/></svg>Undefined Socket Type</div>
            <div class="r"><i class="so bad"></i><svg class="w"><use href="#warn"/></svg>Undefined Socket Type</div>
            <div class="r"><i class="so bad"></i><svg class="w"><use href="#warn"/></svg>Undefined Socket Type</div>
            <div class="r"><i class="so bad"></i><svg class="w"><use href="#warn"/></svg>Undefined Socket Type</div>
          </div></article>

        <article class="node n3"><h3><svg class="cv"><use href="#chev"/></svg>Undefined</h3>
          <div class="outr">OutEnv<i class="so sh"></i></div>
          <div class="rows">
            <div class="r"><i class="so vec"></i>Sun direction</div>
            <div class="r"><i class="so"></i><label class="f">Sky turbidity<input value="2.200"></label></div>
            <div class="r"><i class="so"></i><label class="f">Power<input value="1.000"></label></div>
            <div class="r"><i class="so"></i><label class="f">North offset<input value="0.000"></label></div>
            <div class="r"><i class="so col-s"></i><label class="c">Sky color<input type="color" value="#4095ff"></label></div>
            <div class="r"><i class="so col-s"></i><label class="c">Sunset ...<input type="color" value="#cb6026"></label></div>
            <div class="r"><i class="so"></i><label class="f">Sun size<input value="1.000"></label></div>
            <div class="r"><i class="so col-s"></i><label class="c">Ground...<input type="color" value="#000000"></label></div>
            <div class="r"><i class="so"></i><label class="f">Ground start<input value="90.000"></label></div>
            <div class="r"><i class="so"></i><label class="f">Ground blend<input value="5.000"></label></div>
            <div class="r"><i class="so sh"></i>Sky texture</div>
            <div class="r"><i class="so boo"></i><label class="ck"><input type="checkbox" checked>Importance sampling</label></div>
            <div class="r"><i class="so sh"></i>Medium</div>
            <div class="r"><i class="so"></i><label class="f">Medium radius<input value="1.000"></label></div>
            <div class="r"><i class="so boo"></i><label class="ck"><input type="checkbox">Visable env Backplate</label></div>
            <div class="r"><i class="so boo"></i><label class="ck"><input type="checkbox">Visable env Reflections</label></div>
            <div class="r"><i class="so boo"></i><label class="ck"><input type="checkbox">Visable env Refractions</label></div>
          </div></article>

        <article class="node n4"><h3><svg class="cv"><use href="#chev"/></svg>World Output</h3>
          <div class="nsel"><select aria-label="Target"><option>All</option></select><svg class="cv"><use href="#chev"/></svg></div>
          <div class="rows"><div class="r"><i class="so sh"></i>Surface</div><div class="r"><i class="so sh"></i>Volume</div></div></article>
        <div class="sbv"></div><div class="sbh"></div>
        <button class="side side-n" aria-label="Show sidebar"><svg class="cv lt"><use href="#chev"/></svg></button>
      </section>
    </div>

    <div class="col right">
      <section class="area outliner">
        <div class="hdr oh">
          <div class="grp"><button class="dd w32"><svg class="ic"><use href="#outl"/></svg><svg class="cv"><use href="#chev"/></svg></button></div>
          <div class="grp"><button class="dd w32"><svg class="ic"><use href="#view"/></svg><svg class="cv"><use href="#chev"/></svg></button></div>
          <label class="search s-out"><svg class="ic"><use href="#find"/></svg><input aria-label="Filter"></label>
          <div class="grp"><button class="dd w32"><svg class="ic"><use href="#funo"/></svg><svg class="cv"><use href="#chev"/></svg></button></div>
          <div class="grp"><button class="sq grey"><svg class="ic"><use href="#boxadd"/></svg></button></div>
        </div>
        <ul class="tree">
          <li class="l0"><svg class="ic"><use href="#box"/></svg><span class="label">Scene Collection</span></li>
          <li class="l1"><b class="tri down"></b><span class="ib"><svg class="ic"><use href="#box"/></svg></span><span class="label">Collection</span><span class="acts"><svg class="ic"><use href="#tick"/></svg><svg class="ic"><use href="#cur"/></svg><svg class="ic"><use href="#eye"/></svg><svg class="ic"><use href="#mon"/></svg><svg class="ic"><use href="#shot"/></svg></span></li>
          <li class="l2 active"><b class="tri"></b><span class="ib tint"><svg class="ic or"><use href="#cam"/></svg></span><span class="label name">Camera</span><span class="ib tint data"><svg class="ic gr"><use href="#camo"/></svg></span><span class="acts"><svg class="ic"><use href="#cur"/></svg><svg class="ic"><use href="#eye"/></svg><svg class="ic"><use href="#mon"/></svg><svg class="ic"><use href="#shot"/></svg></span></li>
          <li class="l2"><b class="tri"></b><span class="ib no"><svg class="ic or"><use href="#mesh"/></svg></span><span class="label n-s">Cube</span><svg class="ic gr"><use href="#mesho"/></svg><span class="acts"><svg class="ic"><use href="#cur"/></svg><svg class="ic"><use href="#eye"/></svg><svg class="ic"><use href="#mon"/></svg><svg class="ic"><use href="#shot"/></svg></span></li>
          <li class="l2"><b class="tri"></b><span class="ib no"><svg class="ic or"><use href="#lamp"/></svg></span><span class="label n-s">Light</span><svg class="ic gr"><use href="#lampo"/></svg><span class="acts"><svg class="ic"><use href="#cur"/></svg><svg class="ic"><use href="#eye"/></svg><svg class="ic"><use href="#mon"/></svg><svg class="ic"><use href="#shot"/></svg></span></li>
        </ul>
      </section>

      <section class="area props">
        <div class="hdr ph">
          <div class="grp"><button class="dd w32"><svg class="ic"><use href="#props"/></svg><svg class="cv"><use href="#chev"/></svg></button></div>
          <label class="search s-prop"><svg class="ic"><use href="#find"/></svg><input aria-label="Search properties"></label>
          <div class="grp"><button class="sq"><svg class="cv"><use href="#chev"/></svg></button></div>
        </div>
        <div class="pbody">
          <nav class="ptabs">
            <button aria-label="Tool"><svg class="ic"><use href="#tool"/></svg></button><hr>
            <button class="on" aria-label="Render"><svg class="ic"><use href="#rend"/></svg></button>
            <button aria-label="Output"><svg class="ic"><use href="#out"/></svg></button>
            <button aria-label="View Layer"><svg class="ic"><use href="#view"/></svg></button>
            <button aria-label="Scene"><svg class="ic"><use href="#scene"/></svg></button>
            <button class="c-red" aria-label="World"><svg class="ic"><use href="#world"/></svg></button><hr>
            <button class="c-wh" aria-label="Collection"><svg class="ic"><use href="#boxo"/></svg></button><hr>
            <button class="or" aria-label="Object"><svg class="ic"><use href="#obj"/></svg></button>
            <button class="c-bl" aria-label="Physics"><svg class="ic"><use href="#phys"/></svg></button>
            <button class="c-bl" aria-label="Constraints"><svg class="ic"><use href="#cons"/></svg></button>
            <button class="gr" aria-label="Data"><svg class="ic"><use href="#camo"/></svg></button><hr>
            <button class="c-red" aria-label="Texture"><svg class="ic"><use href="#tex"/></svg></button>
          </nav>
          <div class="pcontent">
            <div class="ctx"><svg class="ic"><use href="#scene"/></svg><span>Scene</span><svg class="ic dim push"><use href="#pin"/></svg></div>
            <div class="engine"><label for="eng">Render Engine</label><div class="sel"><select id="eng"><option>Eevee</option></select><svg class="cv"><use href="#chev"/></svg></div></div>
            <section class="panel"><header><svg class="cv big"><use href="#thin"/></svg><h2>Sampling</h2><svg class="gp"><use href="#grip"/></svg></header>
              <div class="samp"><label for="sr">Render</label><input id="sr" class="top" value="64"><label for="sv">Viewport</label><input id="sv" class="bot" value="16"><label class="ck bright dn"><input type="checkbox" checked>Viewport Denoising</label></div>
            </section>
            <section class="panel"><header><svg class="cv big rt"><use href="#thin"/></svg><label class="ck"><input type="checkbox">Ambient Occlusion</label><svg class="gp"><use href="#grip"/></svg></header></section>
            <section class="panel"><header><svg class="cv big rt"><use href="#thin"/></svg><label class="ck"><input type="checkbox">Bloom</label><svg class="gp"><use href="#grip"/></svg></header></section>
            <section class="panel"><header><svg class="cv big rt"><use href="#thin"/></svg><h2>Depth of Field</h2><svg class="gp"><use href="#grip"/></svg></header></section>
            <section class="panel"><header><svg class="cv big rt"><use href="#thin"/></svg><h2>Subsurface Scattering</h2><svg class="gp"><use href="#grip"/></svg></header></section>
            <section class="panel"><header><svg class="cv big rt"><use href="#thin"/></svg><label class="ck"><input type="checkbox">Screen Space Reflections</label><svg class="gp"><use href="#grip"/></svg></header></section>
            <section class="panel"><header><svg class="cv big rt"><use href="#thin"/></svg><label class="ck"><input type="checkbox">Motion Blur</label><svg class="gp"><use href="#grip"/></svg></header></section>
            <section class="panel"><header><svg class="cv big rt"><use href="#thin"/></svg><h2>Volumetrics</h2><svg class="gp"><use href="#grip"/></svg></header></section>
            <section class="panel"><header><svg class="cv big rt"><use href="#thin"/></svg><h2>Performance</h2><svg class="gp"><use href="#grip"/></svg></header></section>
            <section class="panel"><header><svg class="cv big rt"><use href="#thin"/></svg><h2>Curves</h2><svg class="gp"><use href="#grip"/></svg></header></section>
            <section class="panel"><header><svg class="cv big rt"><use href="#thin"/></svg><h2>Shadows</h2><svg class="gp"><use href="#grip"/></svg></header></section>
            <section class="panel"><header><svg class="cv big rt"><use href="#thin"/></svg><h2>Indirect Lighting</h2><svg class="gp"><use href="#grip"/></svg></header></section>
            <section class="panel"><header><svg class="cv big rt"><use href="#thin"/></svg><h2>Film</h2><svg class="gp"><use href="#grip"/></svg></header></section>
            <section class="panel"><header><svg class="cv big rt"><use href="#thin"/></svg><label class="ck"><input type="checkbox">Simplify</label><svg class="gp"><use href="#grip"/></svg></header></section>
            <section class="panel"><header><svg class="cv big"><use href="#thin"/></svg><label class="ck"><input type="checkbox">Freestyle SVG Export</label><svg class="gp"><use href="#grip"/></svg></header>
              <div class="free">
                <div class="seg"><button class="on">Frame</button><button>Animation</button></div>
                <div class="two"><label class="ck"><input type="checkbox">Split at Invisible</label><label class="ck"><input type="checkbox">Fill Contours</label></div>
                <div class="seg"><button>Miter</button><button class="on">Round</button><button>Bevel</button></div>
              </div>
            </section>
            <section class="panel"><header><svg class="cv big rt"><use href="#thin"/></svg><h2>Grease Pencil</h2><svg class="gp"><use href="#grip"/></svg></header></section>
          </div>
          <div class="psb"></div>
        </div>
      </section>
    </div>
  </main>

  <footer class="status">
    <span class="hint"><svg viewBox="0 0 12 14"><rect x="1" y="1" width="10" height="12" rx="3" fill="none" stroke="currentColor"/><path d="M1 2h4v5H1z" fill="currentColor"/></svg>Select</span>
    <span class="hint"><svg viewBox="0 0 12 14"><rect x="1" y="1" width="10" height="12" rx="3" fill="none" stroke="currentColor"/><path d="M4.500 3h3v5h-3z" fill="currentColor"/></svg>Rotate View</span>
    <span class="hint"><svg viewBox="0 0 12 14"><rect x="1" y="1" width="10" height="12" rx="3" fill="none" stroke="currentColor"/><path d="M7 2h4v5H7z" fill="currentColor"/></svg>Object Context Menu</span>
    <span class="push">3.6.1</span>
  </footer>
</div>
</body>
</html>
```
FILE: styles.css
```css
* { box-sizing: border-box; }
body {
  margin: 0; height: 100vh; overflow: hidden; position: relative;
  background: linear-gradient(100deg, #00b2fb 0%, #00adf8 35%, #0090ee 70%, #0067d2 90%, #0062ce 100%);
  font: 11px/18px "DejaVu Sans Condensed", "DejaVu Sans", sans-serif; color: #dcdcdc;
}
button, input, select { font: inherit; color: inherit; margin: 0; padding: 0; border: 0; background: none; border-radius: 0; outline: 0; min-width: 0; appearance: none; text-shadow: inherit; }
h2, h3, p, dl, dd, ul { margin: 0; padding: 0; font: inherit; }
hr { margin: 0; border: 0; }
svg { display: block; flex: none; }
.sprite { position: absolute; width: 0; height: 0; }
.ic { width: 15px; height: 15px; }
.cv { width: 8px; height: 8px; }
.cv.big { width: 10px; height: 10px; color: #b0b0b0; }
.rt { transform: rotate(-90deg); }
.lt { transform: rotate(90deg); }
.dim { opacity: .6; }
.push { margin-left: auto; }
.or { color: #c9824c; }
.gr { color: #00b386; }

/* desktop and the window behind */
.back-window { position: absolute; right: 0; top: 0; width: 48px; height: calc(100% - 205px); background: #fff; color: #6d6d6d; font: 11px/16px "Open Sans", sans-serif; overflow: hidden; }
.bw-title { padding: 3px 0 6px 6px; height: 26px; border-bottom: 1px solid #d5d5d5; white-space: nowrap; }
.bw-cols { height: 21px; padding: 11px 0 0 23px; color: #44567f; }
.bw-front { border-top: 1px solid #999; background: #fff; position: relative; height: 100%; }
.bw-bar { height: 60px; border-bottom: 1px solid #ccc; padding-top: 53px; }
.bw-bar::before { content: ""; display: block; border-top: 1px solid #ccc; }
.bw-search { height: 30px; line-height: 28px; padding-left: 15px; border-bottom: 1px solid #ccc; }
.desk { position: absolute; color: #fff; font: 11px/14px "Open Sans", sans-serif; text-shadow: 0 1px 2px #000, 0 0 2px #000; white-space: nowrap; }
.d-upgrade { left: -5px; bottom: 15px; }
.d-file { left: 418px; bottom: 0; width: 48px; }
.d-firefly { left: 832px; bottom: -6px; width: 30px; }
.d-firefly span { display: block; margin-left: -11px; line-height: 12px; }
.d-folder { left: 1196px; bottom: -2px; width: 30px; }
.d-pdf { left: 1404px; bottom: -6px; width: 30px; }
.d-is { right: -3px; bottom: 79px; }

.app { position: absolute; inset: 0 40px 29px 0; display: grid; grid-template-rows: 28px 27px minmax(0, 1fr) 21px; grid-template-columns: minmax(0, 1fr); background: #171717; box-shadow: 0 0 0 1px rgba(70, 80, 90, .7), 2px 2px 10px rgba(0, 0, 0, .5); text-shadow: 0 1px 1px rgba(0, 0, 0, .6); }
.titlebar { display: flex; align-items: center; background: #fff; color: #999; font: 11px/16px "Open Sans", sans-serif; padding: 0 0 2px 6px; text-shadow: none; }
.titlebar .t-logo { color: #ea7600; --dot: #265787; margin-right: 5px; width: 15px; }
.t-name { flex: 1; }
.titlebar button { width: 46px; height: 26px; display: grid; place-items: center; padding-bottom: 1px; }
.titlebar button svg { width: 10px; height: 10px; fill: none; stroke: #888; }

.topbar { display: flex; background: #1d1d1d; padding: 3px 8px 0 7px; }
.b-logo { margin-top: 2px; width: 16px; }
.menus { display: flex; flex: none; justify-content: space-between; }
.menus button { padding: 0 8px; white-space: nowrap; }
.m-top { width: 210px; height: 20px; margin: 1px 18px 0 2px; }
.m-view { width: 170px; margin-left: 4px; }
.m-node { width: 162px; margin-left: 6px; }
.tabs { display: flex; flex: 1; margin-top: 3px; height: 21px; color: #989898; min-width: 0; }
.tabs button { padding: 0 10px; white-space: nowrap; border-radius: 4px 4px 0 0; }
.tabs .on { background: #303030; color: #fff; padding: 0 9px; margin-right: 1px; }
.tabs .plus { padding: 0 6px; }
.plus svg { width: 9px; height: 9px; stroke: #989898; fill: none; }

.grp { display: flex; flex: none; height: 20px; border: 1px solid #3d3d3d; border-radius: 4px; background: #282828; overflow: hidden; gap: 1px; }
.grp .dd { display: flex; align-items: center; justify-content: center; gap: 3px; flex: none; }
.dd.w30 { width: 28px; }
.dd.w32 { width: 30px; }
.grp .dd.opt { padding: 0 6px 0 7px; gap: 6px; }
.sq { width: 18px; display: grid; place-items: center; flex: none; }
.grey { background: #545454; }
.off { background: #2c2c2c; color: #666; }
.blue { background: #4772b3; color: #fff; }
.faded { opacity: .8; }
.soft { border-color: #333; }
.sp6 { margin-left: 6px; }
.sp7 { margin-left: 7px; }
.sp18 { margin-left: 18px; }
.block { width: 192px; background: #1d1d1d; }
.block + .block { margin-left: 5px; }
.block .dd { width: 30px; background: #232323; border-right: 1px solid #3d3d3d; }
.block input { flex: 1; padding-left: 7px; width: 0; }
.fieldpin { margin: 2px 4px; }
.sel { display: flex; align-items: center; height: 20px; flex: none; border: 1px solid #3d3d3d; border-radius: 4px; background: #282828; padding: 0 4px; }
.sel select { flex: 1; padding-left: 6px; height: 18px; }
.w-mode { width: 110px; margin-left: 6px; }
.w-global { width: 78px; }
.w-world { width: 88px; margin-left: 6px; }
.search { display: flex; align-items: center; height: 20px; flex: none; border: 1px solid #3d3d3d; border-radius: 4px; background: #1d1d1d; padding-left: 4px; }
.search input { flex: 1; width: 0; }

.areas { display: grid; grid-template-columns: minmax(0, 833fr) minmax(0, 752fr); gap: 3px; padding-right: 1px; min-height: 0; }
.col { display: grid; grid-template-rows: minmax(0, 404fr) minmax(0, 600fr); grid-template-columns: minmax(0, 1fr); gap: 3px; min-height: 0; }
.col.right { grid-template-rows: minmax(0, 323fr) minmax(0, 681fr); }
.area { position: relative; overflow: hidden; border-radius: 6px; min-height: 0; }
.hdr { position: relative; display: flex; align-items: center; height: 26px; }
.vh { background: rgba(48, 48, 48, .7); padding: 0 0 2px 7px; }
.vh2 { background: rgba(48, 48, 48, .5); padding: 0 8px 0 41px; }
.hexi { margin: 0 3px 0 69px; }
.s-view { width: 178px; margin: 0 1px; }

.viewport { background: #3b3b3b; }
.scene3d { position: absolute; inset: 0; width: 100%; height: 100%; }
.tools { position: absolute; left: 6px; top: 60px; display: flex; flex-direction: column; gap: 6px; }
.tg { display: flex; flex-direction: column; gap: 1px; width: 39px; border-radius: 4px; overflow: hidden; background: #3d3d3d; box-shadow: 0 0 0 1px #3d3d3d; }
.tools button { height: 34px; background: #282828; display: grid; place-items: center; position: relative; padding: 0 1px 2px 0; }
.tools button svg { width: 26px; height: 26px; }
.tools .on { background: #4772b3; }
.tools .more::after { content: ""; position: absolute; right: 2px; bottom: 2px; width: 4px; height: 4px; background: linear-gradient(135deg, transparent 50%, #aaa 50%); }
.stats { position: absolute; left: 64px; top: 59px; color: #fff; text-shadow: 0 1px 2px #000; }
.stats dl { margin-top: 11px; display: grid; grid-template-columns: 55px auto; }
.navi { position: absolute; right: 8px; top: 53px; display: flex; flex-direction: column; align-items: flex-end; gap: 2px; }
.axes { width: 70px; height: 84px; margin: 0 12px 3px 0; }
.ax { font: bold 11px "DejaVu Sans", sans-serif; text-anchor: middle; fill: #111; }
.navi button { width: 28px; height: 28px; border-radius: 14px; background: #2a2a2a; display: grid; place-items: center; color: #dedede; }
.navi button svg { width: 17px; height: 17px; }
.side { position: absolute; width: 12px; height: 16px; background: #2a2a2a; border-radius: 4px; display: grid; place-items: center; color: #bbb; }
.side-v { right: -2px; top: 64px; }
.side-n { right: -2px; top: 39px; background: #1a1a1a; }
.side-l { left: -6px; top: 39px; background: #181818; }

.nodes { background: #1d1d1d; }
.dots, .link { position: absolute; left: 0; top: 0; width: 100%; height: 100%; }
.nh { padding: 0 7px 0 5px; height: 27px; }
.usen { margin-left: 6px; }
.ck { display: flex; align-items: center; gap: 3px; white-space: nowrap; }
.ck.bright { color: #fff; }
.ck input, .n3 .ck input { width: 12px; height: 12px; background: #545454; border-radius: 2px; display: grid; place-items: center; flex: none; }
.ck input:checked, .n3 .ck input:checked { background: #4772b3; }
.ck input:checked::before { content: ""; width: 9px; height: 9px; background: #fff; clip-path: polygon(0 52%, 14% 38%, 38% 62%, 86% 10%, 100% 24%, 38% 92%); }
.datab { width: 212px; margin-left: 34px; }
.npin { margin-left: 8px; }
.crumbs { position: relative; display: flex; align-items: center; height: 42px; padding-left: 16px; }
.crumbs span { margin-left: 8px; }
.crumbs .big { margin: 0 8px 0 14px; color: #ddd; }
.sbv { position: absolute; right: 2px; top: 35px; bottom: 15px; width: 3px; border-radius: 2px; background: #303030; }
.sbh { position: absolute; left: 6px; right: 10px; bottom: 2px; height: 3px; border-radius: 2px; background: #333; }

.node { position: absolute; display: flex; flex-direction: column; border: 1px solid #ec3b3e; border-radius: 3px; background: #a13636; font-size: 7px; line-height: 11px; box-shadow: 0 2px 4px rgba(0, 0, 0, .6); }
.node h3 { display: flex; align-items: center; gap: 3px; height: 13px; padding-left: 5px; background: #823049; border-bottom: 1px solid #4a1c2c; border-radius: 2px 2px 0 0; }
.node h3 .cv { width: 7px; height: 7px; }
.n1 { left: 102px; top: 149px; width: 99px; height: 117px; }
.n2 { left: 346px; top: 217px; width: 124px; height: 319px; border-color: #f2f2f2; color: #e2cfcf; }
.n3 { left: 526px; top: 142px; width: 100px; height: 265px; }
.n4 { left: 671px; top: 99px; width: 88px; height: 60px; background: #303030; border-color: #1a1a1a; }
.n4 h3 { background: #3e1b26; border-color: #1d1013; }
.outr { position: relative; height: 17px; display: flex; align-items: center; justify-content: flex-end; padding-right: 7px; }
.n2 .outr { gap: 6px; padding-right: 11px; }
.outr .so { left: auto; right: -3px; }
.w { width: 9px; height: 9px; }
.rows { flex: 1; display: flex; flex-direction: column; margin: 1px 0 2px; min-height: 0; }
.r { flex: 1 1 0; min-height: 0; position: relative; display: flex; align-items: center; padding: 0 6px; white-space: nowrap; }
.n1 .r { padding: 0 6px 0 5px; }
.n2 .r { padding-left: 8px; gap: 6px; }
.so { position: absolute; left: -3px; width: 5px; height: 5px; border-radius: 3px; background: #a1a1a1; box-shadow: 0 0 0 1px rgba(20, 20, 20, .7); }
.int { background: #4f9152; }
.sh { background: #63c763; }
.vec { background: #6363c7; }
.col-s { background: #c7c729; }
.boo { background: #cca6d6; }
.bad { background: #ff1010; box-shadow: 0 0 0 1px rgba(130, 70, 70, .8); }
.f { flex: 1; display: flex; height: 12px; align-items: center; background: #545454; border: 1px solid #3d3d3d; border-radius: 2px; padding: 0 8px 0 9px; min-width: 0; }
.f input { flex: 1; width: 0; height: 9px; text-align: right; line-height: 9px; }
.c { flex: 1; display: flex; justify-content: space-between; align-items: center; }
.c input { width: 49px; height: 12px; border: 1px solid #3d3d3d; border-radius: 2px; overflow: hidden; }
.c input::-webkit-color-swatch-wrapper { padding: 0; }
.c input::-webkit-color-swatch { border: 0; }
.n3 .ck { gap: 1px; padding-left: 1px; }
.n3 .ck input { width: 9px; height: 9px; box-shadow: 0 0 0 1px #3d3d3d; }
.nsel { display: flex; align-items: center; height: 12px; margin: 2px 7px 0 6px; border: 1px solid #3d3d3d; border-radius: 2px; background: #282828; padding: 0 2px 0 4px; flex: none; }
.nsel select { flex: 1; line-height: 10px; height: 10px; }
.nsel .cv { width: 6px; height: 6px; }
.n4 .rows { margin: 2px 0 1px; }

.outliner { background: repeating-linear-gradient(#282828 0 20px, #2b2b2b 20px 40px) 0 26px #282828; }
.oh { padding: 0 6px 0 8px; gap: 5px; background: #282828; }
.s-out { width: 110px; margin: 0 auto 0 228px; }
.tree { list-style: none; position: relative; }
.tree::before { content: ""; position: absolute; left: 29px; top: 45px; width: 1px; height: 50px; background: #666; z-index: 1; }
.tree li { display: flex; align-items: center; height: 20px; padding-right: 9px; }
.label { padding-top: 2px; }
.l0 { padding-left: 22px; gap: 7px; }
.l1 { padding-left: 25px; }
.l2 { padding-left: 47px; }
.tri { width: 0; height: 0; border: solid transparent; border-width: 3px 0 3px 6px; border-left-color: #ccc; margin: 0 7px 0 0; }
.tri.down { border-width: 6px 3px 0 3px; border-top-color: #ccc; border-left-color: transparent; margin: 0 9px 0 1px; }
.ib { width: 20px; height: 18px; border-radius: 4px; background: #545454; box-shadow: inset 0 0 0 1px #777; display: grid; place-items: center; margin-right: 4px; }
.ib.tint { background: #5b6f97; box-shadow: inset 0 0 0 1px #7183a6; }
.ib.no { background: none; box-shadow: none; }
.ib.data { margin: 0; background: #53719a; }
.data .gr { color: #10c8a4; }
.name { width: 59px; }
.n-s { width: 47px; }
.active { background: #334d80; }
.active .name { color: #f2a62c; }
.acts { margin-left: auto; display: flex; color: #e6e6e6; }
.acts .ic { width: 20px; padding: 0 2px; }

.props { background: #303030; display: flex; flex-direction: column; }
.ph { height: 25px; padding: 0 6px 1px 8px; flex: none; }
.s-prop { width: 110px; margin: 0 auto 0 282px; }
.pbody { flex: 1; display: flex; min-height: 0; }
.ptabs { width: 28px; flex: none; background: #1d1d1d; padding: 8px 0 0 2px; display: flex; flex-direction: column; gap: 2px; color: #a6a6a6; }
.ptabs button { height: 26px; border-radius: 4px 0 0 4px; display: grid; place-items: center; flex: none; padding-right: 1px; }
.ptabs .on { background: #303030; color: #ddd; }
.ptabs hr { height: 6px; margin-left: 4px; background: linear-gradient(#141414, #141414) 0 0 / 100% 1px no-repeat; flex: none; }
.ptabs .or { color: #c9824c; }
.ptabs .gr { color: #00b386; }
.c-red { color: #b5525d; }
.c-wh { color: #ddd; }
.c-bl { color: #5f83d2; }
.pcontent { flex: 1; min-width: 0; overflow: hidden; padding: 8px 0 0 8px; display: flex; flex-direction: column; gap: 2px; }
.pcontent > * { flex: none; }
.ctx { display: flex; align-items: center; gap: 8px; height: 20px; padding: 0 2px; }
.engine { display: flex; align-items: center; height: 42px; padding: 14px 0 8px; gap: 8px; }
.engine label { flex: 281 1 0; text-align: right; }
.engine .sel { flex: 422 1 0; padding: 0 2px 0 1px; }
.panel { background: #3d3d3d; border-radius: 4px; }
.panel header { display: flex; align-items: center; height: 25px; padding: 0 6px 0 8px; }
.panel header > .cv { margin-right: 4px; }
.panel header .ck { margin-left: -1px; }
.gp { width: 12px; height: 6px; margin-left: auto; }
.samp { display: grid; grid-template-columns: 281fr 409fr; column-gap: 10px; padding: 9px 9px 8px 0; line-height: 19px; }
.samp > label { text-align: right; }
.samp > input { background: #545454; text-align: center; height: 19px; width: 100%; padding-right: 2px; }
.samp > .top { border-radius: 3px 3px 0 0; border-bottom: 1px solid #424242; }
.samp > .bot { border-radius: 0 0 3px 3px; }
.samp .dn { grid-column: 2; margin-top: 6px; height: 20px; gap: 4px; }
.free { padding: 9px; color: #989898; display: flex; flex-direction: column; }
.seg { display: flex; gap: 1px; height: 18px; border-radius: 3px; overflow: hidden; }
.seg button { flex: 1 1 0; background: #484848; }
.seg .on { background: #42567d; color: #aaa; }
.two { display: grid; grid-template-columns: 1fr 1fr; column-gap: 9px; height: 32px; align-items: center; }
.two .ck input { background: #484848; }
.two .ck { gap: 4px; }
.psb { width: 3px; margin: 10px 2px 69px; border-radius: 2px; background: #3d3d3d; flex: none; }

.status { background: #1d1d1d; color: #989898; display: flex; align-items: center; padding: 1px 9px 0; line-height: 20px; }
.hint { width: 211px; display: flex; align-items: center; gap: 10px; }
.hint svg { width: 12px; height: 14px; }
```
